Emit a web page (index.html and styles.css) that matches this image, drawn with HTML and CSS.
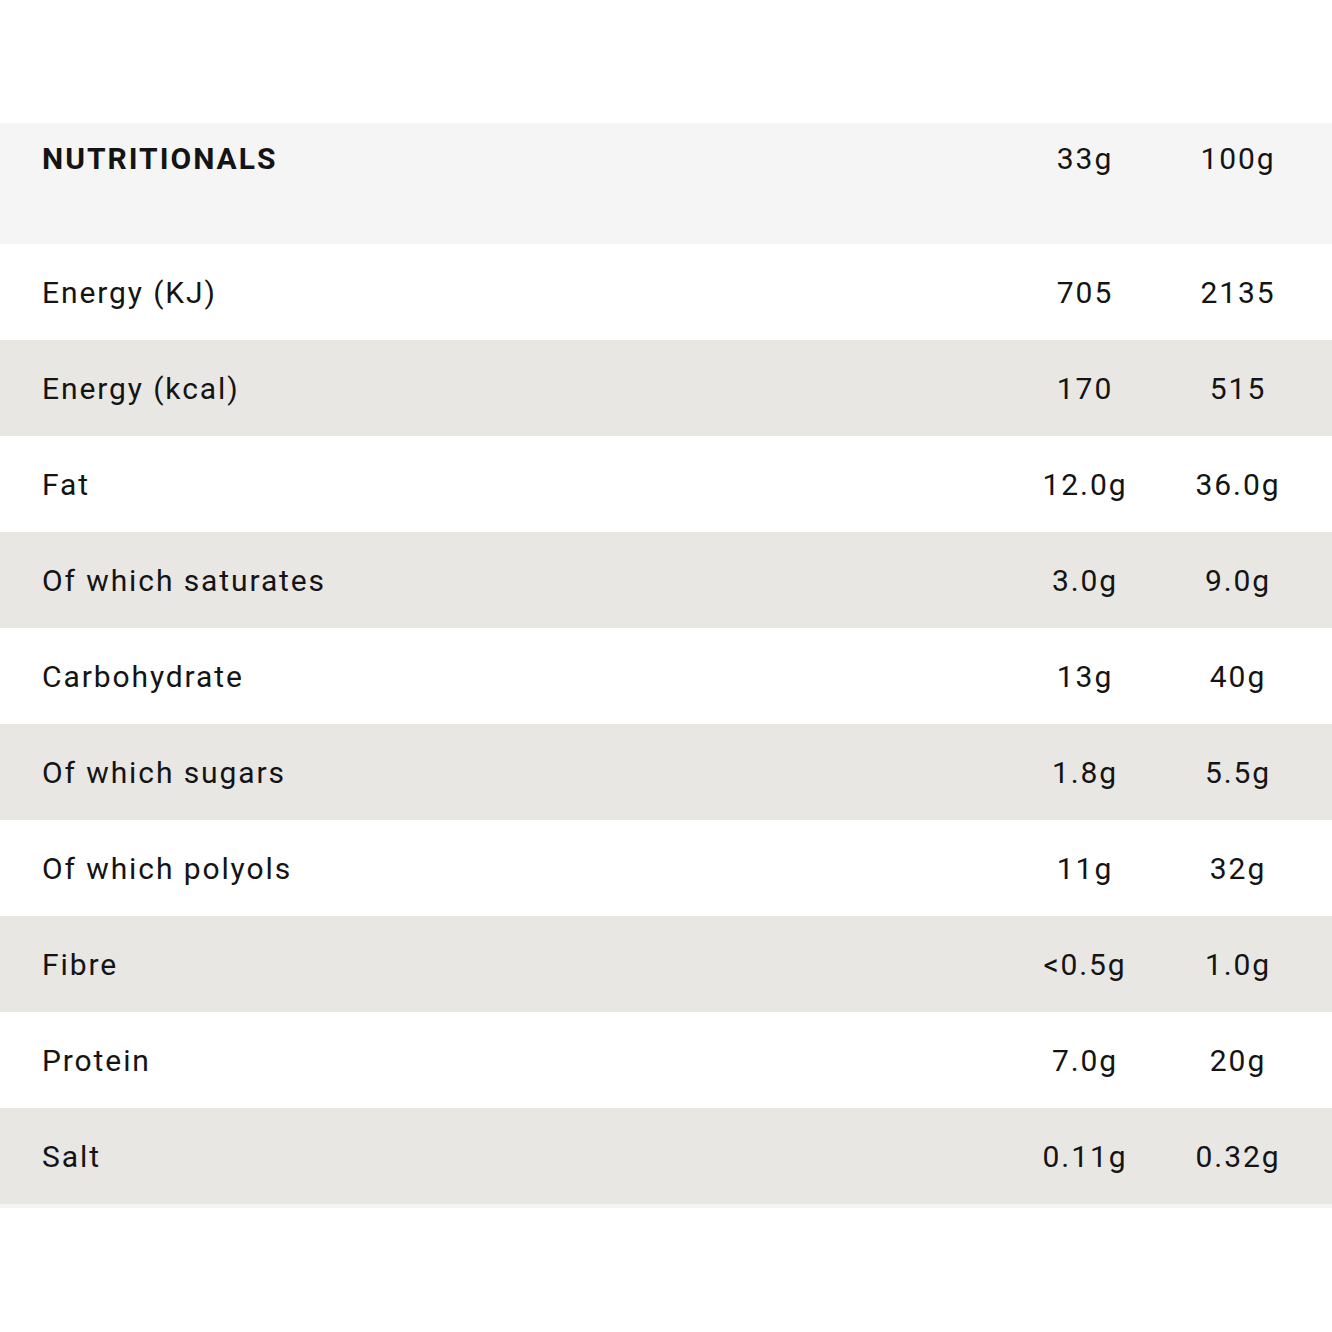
FILE: index.html
```html
<!DOCTYPE html>
<html>
<head>
<meta charset="utf-8">
<link rel="stylesheet" href="styles.css">
</head>
<body>
<div class="page">
  <div class="table">
    <div class="row head">
      <div class="label">NUTRITIONALS</div>
      <div class="val">33g</div>
      <div class="val">100g</div>
    </div>
    <div class="row">
      <div class="label">Energy (KJ)</div>
      <div class="val">705</div>
      <div class="val">2135</div>
    </div>
    <div class="row alt">
      <div class="label">Energy (kcal)</div>
      <div class="val">170</div>
      <div class="val">515</div>
    </div>
    <div class="row">
      <div class="label">Fat</div>
      <div class="val">12.0g</div>
      <div class="val">36.0g</div>
    </div>
    <div class="row alt">
      <div class="label">Of which saturates</div>
      <div class="val">3.0g</div>
      <div class="val">9.0g</div>
    </div>
    <div class="row">
      <div class="label">Carbohydrate</div>
      <div class="val">13g</div>
      <div class="val">40g</div>
    </div>
    <div class="row alt">
      <div class="label">Of which sugars</div>
      <div class="val">1.8g</div>
      <div class="val">5.5g</div>
    </div>
    <div class="row">
      <div class="label">Of which polyols</div>
      <div class="val">11g</div>
      <div class="val">32g</div>
    </div>
    <div class="row alt">
      <div class="label">Fibre</div>
      <div class="val">&lt;0.5g</div>
      <div class="val">1.0g</div>
    </div>
    <div class="row">
      <div class="label">Protein</div>
      <div class="val">7.0g</div>
      <div class="val">20g</div>
    </div>
    <div class="row alt">
      <div class="label">Salt</div>
      <div class="val">0.11g</div>
      <div class="val">0.32g</div>
    </div>
  </div>
</div>
</body>
</html>
```
FILE: styles.css
```css
html, body {
  margin: 0;
  padding: 0;
  background: #ffffff;
}
.page {
  padding-top: 123px;
  font-family: Roboto, "Liberation Sans", sans-serif;
  color: #141414;
}
.table {
  display: flex;
  flex-direction: column;
  border-bottom: 4px solid #f4f4f4;
}
.row {
  display: grid;
  grid-template-columns: 1fr 150px 156px;
  align-items: center;
  height: 96px;
  padding: 0 16px 0 42px;
  font-size: 30px;
  letter-spacing: 1.9px;
  background: #ffffff;
}
.row.alt {
  background: #e8e7e4;
}
.row.head {
  height: 121px;
  align-items: start;
  padding-top: 18px;
  box-sizing: border-box;
  background: #f5f5f5;
}
.head .label {
  font-weight: 700;
  letter-spacing: 2px;
}
.label {
  white-space: nowrap;
}
.val {
  text-align: center;
  white-space: nowrap;
}
```
